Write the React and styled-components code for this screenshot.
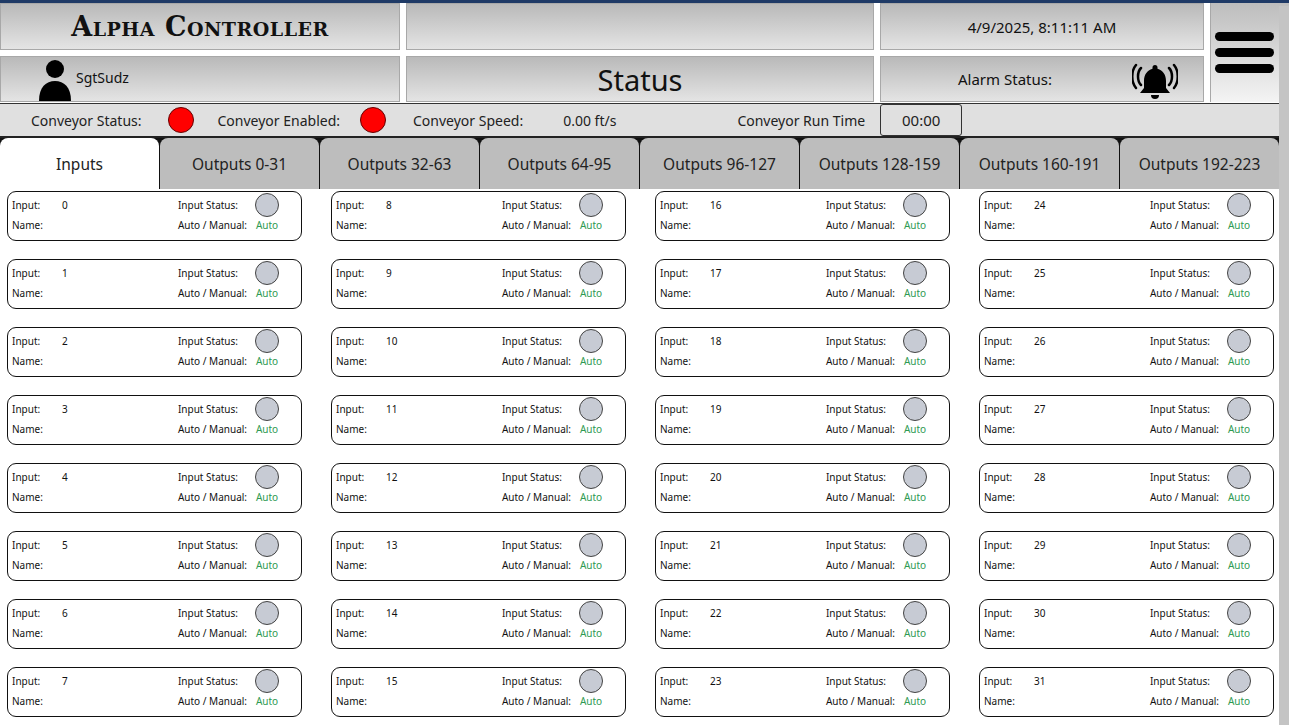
import React from 'react';
import styled, { createGlobalStyle } from 'styled-components';

const Global = createGlobalStyle`
  html, body { margin: 0; padding: 0; background: #fff; }
  body { font-family: "Noto Sans", "Open Sans", sans-serif; overflow: hidden; }
`;

const Page = styled.div`
  width: 1289px;
  height: 725px;
  display: flex;
  flex-direction: column;
  border-top: 3px solid #1f3a66;
  box-sizing: border-box;
  position: relative;
`;

const Header = styled.div`
  display: grid;
  grid-template-columns: 400px 468px 324px 1fr;
  grid-template-rows: 47px 46px;
  column-gap: 6px;
  row-gap: 6px;
  background: #fff;
  height: 100px;
`;

const Cell = styled.div`
  background: linear-gradient(#b9b9b9, #e4e4e4);
  border: 1px solid #a8a8a8;
  display: flex;
  align-items: ${p => p.$align || 'center'};
  justify-content: ${p => p.$justify || 'center'};
  padding: ${p => p.$pad || '0'};
  gap: ${p => p.$gap || '0'};
  font-size: ${p => p.$size || '15px'};
  color: #111;
  box-sizing: border-box;
  min-width: 0;
`;

const Title = styled.span`
  font-family: "DejaVu Serif", serif;
  font-variant: small-caps;
  font-weight: bold;
  font-size: 27px;
  letter-spacing: 0.5px;
`;

const Menu = styled.div`
  grid-column: 4;
  grid-row: 1 / span 2;
  background: linear-gradient(#bdbdbd, #f4f4f4);
  border-left: 1px solid #a8a8a8;
  display: flex;
  flex-direction: column;
  align-items: flex-start;
  padding: 29px 0 0 4px;
  gap: 7px;
`;

const Bar = styled.div`
  width: 59px;
  height: 9px;
  border-radius: 5px;
  background: #000;
`;

const UserName = styled.span`
  margin-bottom: 14px;
`;

const AlarmText = styled.span`
  flex: 1;
`;

const BellWrap = styled.span`
  margin: 4px 25px 0 0;
  display: flex;
`;

const ConvBar = styled.div`
  height: 32px;
  background: #e0e0e0;
  border-top: 1px solid #333;
  border-bottom: 2px solid #222;
  display: flex;
  align-items: center;
  font-size: 14px;
  color: #222;
  padding-left: 31px;
  margin-right: 10px;
`;

const Label = styled.span`
  margin-right: ${p => p.$mr || '0'};
`;

const Led = styled.span`
  width: 26px;
  height: 26px;
  border-radius: 50%;
  background: #f00;
  border: 1px solid #600;
  margin-right: ${p => p.$mr};
  box-sizing: border-box;
`;

const Timer = styled.div`
  width: 80px;
  height: 30px;
  margin-left: 15px;
  border: 1px solid #333;
  border-radius: 3px;
  display: flex;
  align-items: center;
  justify-content: center;
  font-size: 15px;
`;

const Tabs = styled.div`
  display: flex;
  background: #111;
  height: 51px;
  margin-right: 10px;
`;

const Tab = styled.div`
  flex: 1;
  background: ${p => (p.$active ? '#fff' : '#bdbdbd')};
  border-radius: 8px 8px 0 0;
  margin-left: ${p => (p.$first ? '0' : '1px')};
  display: flex;
  align-items: center;
  justify-content: center;
  font-size: 15.5px;
  color: #222;
`;

const Content = styled.div`
  flex: 1;
  display: grid;
  grid-template-columns: repeat(4, 295px);
  grid-template-rows: repeat(8, 50px);
  grid-auto-flow: column;
  column-gap: 29px;
  row-gap: 18px;
  padding: 2px 0 0 7px;
  margin-right: 10px;
  overflow: hidden;
`;

const Scroll = styled.div`
  position: absolute;
  right: 0;
  top: 3px;
  bottom: 0;
  width: 10px;
  background: #c4c4c4;
`;

const Card = styled.div`
  border: 1px solid #111;
  border-radius: 9px;
  display: grid;
  grid-template-columns: 50px 1fr auto 40px;
  grid-template-rows: 20px 20px;
  align-content: center;
  align-items: center;
  padding: 0 14px 3px 4px;
  font-size: 10px;
  color: #111;
`;

const Dot = styled.span`
  justify-self: center;
  width: 24px;
  height: 24px;
  border-radius: 50%;
  background: #c7cbd4;
  border: 1px solid #444;
  box-sizing: border-box;
`;

const Auto = styled.span`
  justify-self: center;
  color: #2e9a52;
`;

const Person = () => (
  <svg width="34" height="42" viewBox="0 0 34 42">
    <circle cx="17" cy="10" r="9" fill="#000" />
    <path d="M1 42 C1 28 8 22 17 22 C26 22 33 28 33 42 Z" fill="#000" />
  </svg>
);

const BellIcon = () => (
  <svg width="46" height="40" viewBox="0 0 46 40">
    <path d="M23 4 a2.5 2.5 0 0 1 2.5 2.5 v1.2 C31 9 34 14 34 20 v7 l4 5 H8 l4-5 v-7 C12 14 15 9 20.5 7.7 V6.5 A2.5 2.5 0 0 1 23 4 Z" fill="#000" />
    <path d="M19 34 h8 a4 4 0 0 1 -8 0 Z" fill="#000" />
    <path d="M9 7 C5 11 5 20 9 24 M4 4 C-1 10 -1 21 4 27" stroke="#000" strokeWidth="2.5" fill="none" strokeLinecap="round" />
    <path d="M37 7 C41 11 41 20 37 24 M42 4 C47 10 47 21 42 27" stroke="#000" strokeWidth="2.5" fill="none" strokeLinecap="round" />
  </svg>
);

const tabs = ['Inputs', 'Outputs 0-31', 'Outputs 32-63', 'Outputs 64-95', 'Outputs 96-127', 'Outputs 128-159', 'Outputs 160-191', 'Outputs 192-223'];

export default function App() {
  return (
    <Page>
      <Global />
      <Header>
        <Cell><Title>Alpha Controller</Title></Cell>
        <Cell />
        <Cell>4/9/2025, 8:11:11 AM</Cell>
        <Menu><Bar /><Bar /><Bar /></Menu>
        <Cell $justify="flex-start" $align="flex-end" $pad="4px 0 0 37px" $gap="4px" $size="14px">
          <Person /><UserName>SgtSudz</UserName>
        </Cell>
        <Cell $size="29px">Status</Cell>
        <Cell $justify="flex-start" $pad="0 0 0 77px">
          <AlarmText>Alarm Status:</AlarmText>
          <BellWrap><BellIcon /></BellWrap>
        </Cell>
      </Header>
      <ConvBar>
        <Label $mr="26px">Conveyor Status:</Label>
        <Led $mr="24px" />
        <Label $mr="20px">Conveyor Enabled:</Label>
        <Led $mr="27px" />
        <Label $mr="40px">Conveyor Speed:</Label>
        <Label $mr="121px">0.00 ft/s</Label>
        <Label>Conveyor Run Time</Label>
        <Timer>00:00</Timer>
      </ConvBar>
      <Tabs>
        {tabs.map((t, i) => <Tab key={t} $active={i === 0} $first={i === 0}>{t}</Tab>)}
      </Tabs>
      <Content>
        {Array.from({ length: 32 }, (_, i) => (
          <Card key={i}>
            <span>Input:</span><span>{i}</span><span>Input Status:</span><Dot />
            <span>Name:</span><span /><span>Auto / Manual:</span><Auto>Auto</Auto>
          </Card>
        ))}
      </Content>
      <Scroll />
    </Page>
  );
}
